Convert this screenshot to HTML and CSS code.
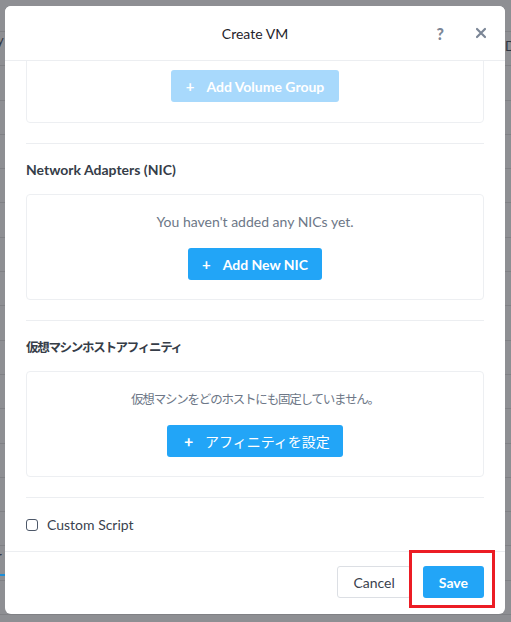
FILE: index.html
```html
<!DOCTYPE html>
<html lang="ja">
<head>
    <meta charset="UTF-8">
    <meta name="viewport" content="width=device-width, initial-scale=1.0">
    <title>Create VM</title>
    <link rel="stylesheet" href="styles.css">
</head>
<body>

    <!-- Página de fondo (tabla detrás del modal) -->
    <div class="page-behind">
        <div class="behind-row"><span class="behind-left">y</span><span class="behind-right">D</span></div>
        <div class="behind-tab"><span class="behind-left">r</span></div>
    </div>

    <!-- Modal -->
    <div class="modal">
        <div class="modal-header">
            <div class="modal-title">Create VM</div>
            <div class="header-icons">
                <span class="icon-help">?</span>
                <svg class="icon-close" width="12" height="12" viewBox="0 0 12 12">
                    <path d="M2 2 L10 10 M10 2 L2 10" stroke="#7b8696" stroke-width="2.2" stroke-linecap="round"/>
                </svg>
            </div>
        </div>

        <div class="modal-body">
            <div class="scroll-inner">
                <div class="card card-volume">
                    <button class="btn btn-primary btn-disabled"><span class="plus">+</span>Add Volume Group</button>
                </div>

                <div class="section">
                    <h3 class="section-title">Network Adapters (NIC)</h3>
                    <div class="card">
                        <p class="empty-text">You haven't added any NICs yet.</p>
                        <button class="btn btn-primary btn-nic"><span class="plus">+</span>Add New NIC</button>
                    </div>
                </div>

                <div class="section">
                    <h3 class="section-title jp">仮想マシンホストアフィニティ</h3>
                    <div class="card">
                        <p class="empty-text jp">仮想マシンをどのホストにも固定していません。</p>
                        <button class="btn btn-primary jp"><span class="plus">+</span>アフィニティを設定</button>
                    </div>
                </div>

                <div class="section section-check">
                    <label class="check-row">
                        <span class="checkbox"></span>
                        Custom Script
                    </label>
                </div>
            </div>
        </div>

        <div class="modal-footer">
            <button class="btn btn-default">Cancel</button>
            <button class="btn btn-primary btn-save">Save</button>
            <div class="highlight-box"></div>
        </div>
    </div>

</body>
</html>
```

FILE: styles.css
```css
body {
    margin: 0;
    width: 511px;
    height: 622px;
    overflow: hidden;
    position: relative;
    background-color: #8e8f93;
    background-image: repeating-linear-gradient(to bottom, transparent 0, transparent 31px, #808185 31px, #808185 32px, transparent 32px, transparent 34.3px);
    font-family: "Lato", "Noto Sans CJK JP", sans-serif;
    color: #333b46;
}

.page-behind {
    padding-top: 32px;
}

.behind-row {
    display: flex;
    justify-content: space-between;
    height: 16px;
    font-size: 13px;
    color: #2e3440;
}

.behind-left {
    margin-left: -3px;
}

.behind-right {
    margin-right: -4px;
    margin-top: 6px;
}

.behind-tab {
    margin-top: 500px;
    width: 20px;
    height: 26px;
    font-size: 13px;
    color: #2e3440;
    border-bottom: 2px solid #1c8fd8;
}

.modal {
    position: absolute;
    left: 5px;
    top: 6px;
    width: 500px;
    height: 608px;
    background: #ffffff;
    border-radius: 6px;
    display: flex;
    flex-direction: column;
    overflow: hidden;
}

.modal-header {
    height: 54px;
    flex-shrink: 0;
    border-bottom: 1px solid #eceef1;
    display: flex;
    align-items: center;
    justify-content: center;
    position: relative;
    background: #ffffff;
    z-index: 2;
}

.modal-title {
    font-size: 14px;
    color: #1f242b;
    margin-top: 1px;
}

.header-icons {
    position: absolute;
    right: 18px;
    top: 0;
    height: 54px;
    display: flex;
    align-items: center;
    gap: 31px;
}

.icon-help {
    font-size: 16px;
    font-weight: 900;
    color: #7b8696;
    margin-top: 1px;
}

.modal-body {
    flex: 1;
    overflow: hidden;
    padding: 0 21px;
}

.scroll-inner {
    margin-top: -12px;
}

.card {
    border: 1px solid #edeff2;
    border-radius: 4px;
    padding: 18px 20px 19px;
    display: flex;
    flex-direction: column;
    align-items: center;
}

.card-volume {
    padding: 20px 20px 20px;
}

.section {
    border-top: 1px solid #eceef1;
    margin-top: 20px;
    padding-top: 18px;
}

.section-title {
    margin: 0 0 16px;
    font-size: 14px;
    line-height: 16px;
    font-weight: 700;
    color: #363d48;
}

.empty-text {
    margin: 0 0 18px;
    font-size: 14px;
    line-height: 17px;
    color: #6d7787;
}

.jp {
    font-family: "Noto Sans CJK JP", sans-serif;
}

.section-title.jp {
    font-size: 12.5px;
    letter-spacing: -1.3px;
}

.empty-text.jp {
    font-size: 12.5px;
    letter-spacing: -1.2px;
}

.btn {
    height: 32px;
    border-radius: 3px;
    font-family: "Lato", "Noto Sans CJK JP", sans-serif;
    font-size: 14px;
    padding: 0 15px;
    cursor: pointer;
    display: inline-flex;
    align-items: center;
}

.btn-primary {
    background-color: #22a5f7;
    color: #ffffff;
    border: none;
    font-weight: 700;
}

.btn-nic {
    padding: 0 14px;
}

.btn-primary.jp {
    font-family: "Noto Sans CJK JP", sans-serif;
    font-weight: 400;
    font-size: 14px;
    padding: 0 13px 0 17px;
}

.btn-disabled {
    background-color: #a8d9fc;
}

.plus {
    font-weight: 700;
    font-size: 15px;
    margin-right: 12px;
}

.section-check {
    padding-top: 18px;
    padding-bottom: 17px;
}

.check-row {
    display: flex;
    align-items: center;
    font-size: 14px;
    line-height: 17px;
    color: #3a424e;
}

.checkbox {
    width: 10px;
    height: 10px;
    border: 1.5px solid #4d5869;
    border-radius: 3px;
    margin-right: 9px;
}

.modal-footer {
    flex-shrink: 0;
    border-top: 1px solid #eceef1;
    padding: 14px 21px 16px;
    display: flex;
    justify-content: flex-end;
    gap: 12px;
    position: relative;
}

.btn-default {
    background: #ffffff;
    border: 1px solid #dcdfe4;
    color: #3a424e;
    font-weight: 400;
    padding: 0 15px;
}

.btn-save {
    padding: 0 16px;
}

.highlight-box {
    position: absolute;
    left: 404px;
    top: -2px;
    width: 80px;
    height: 52px;
    border: 3.5px solid #ec1c24;
}
```
